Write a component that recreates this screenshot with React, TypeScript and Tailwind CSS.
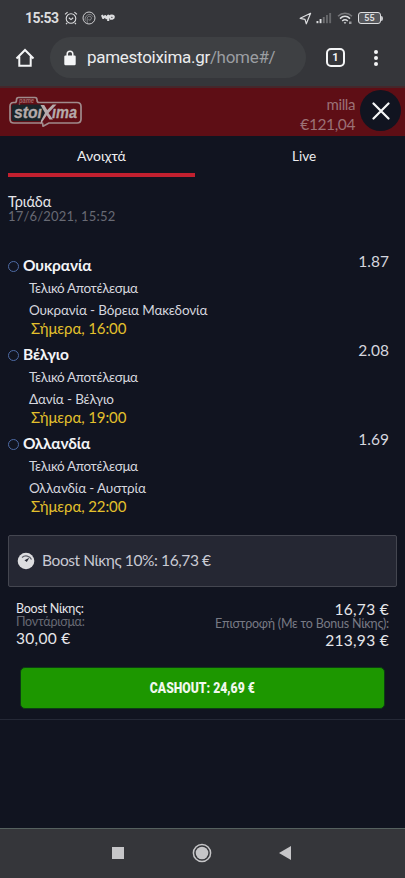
import React from "react";

interface Leg {
  team: string;
  market: string;
  match: string;
  time: string;
  odds: string;
}

const legs: Leg[] = [
  {
    team: "Ουκρανία",
    market: "Τελικό Αποτέλεσμα",
    match: "Ουκρανία - Βόρεια Μακεδονία",
    time: "Σήμερα, 16:00",
    odds: "1.87",
  },
  {
    team: "Βέλγιο",
    market: "Τελικό Αποτέλεσμα",
    match: "Δανία - Βέλγιο",
    time: "Σήμερα, 19:00",
    odds: "2.08",
  },
  {
    team: "Ολλανδία",
    market: "Τελικό Αποτέλεσμα",
    match: "Ολλανδία - Αυστρία",
    time: "Σήμερα, 22:00",
    odds: "1.69",
  },
];

const StatusBar = () => (
  <div className="flex h-[36px] items-center pl-[25px] pr-[22px] text-[#dcdddf]">
    <span className="w-[39px] text-[14px] font-bold leading-none tracking-[-0.5px]">15:53</span>
    <svg className="h-[14px] w-[14px]" viewBox="0 0 14 14" fill="none" stroke="currentColor" strokeWidth="1.1">
      <circle cx="7" cy="7.5" r="4.8" />
      <path d="M4.8 6.8L7 8.6l2.2-1.8M1 3.4L3.6 1.2M13 3.4L10.4 1.2M3.2 11.8l-1.2 1.3M10.8 11.8l1.2 1.3" />
    </svg>
    <svg className="ml-[4px] h-[14px] w-[14px]" viewBox="0 0 14 14" fill="none" stroke="currentColor">
      <circle cx="7" cy="7" r="6" strokeWidth="0.9" />
      <path d="M5.2 12.4V7.6c0-3 4.2-3 4.2-.4 0 2-2.2 2.3-3 1.4M3.3 9.8c-1.4-5.6 5.2-8.6 7.6-4.2" strokeWidth="0.8" opacity="0.6" />
    </svg>
    <svg className="ml-[5px] h-[10px] w-[14px]" viewBox="0 0 14 10" fill="none" stroke="currentColor" strokeWidth="2.1">
      <path d="M1 2l1.2 3L4.200 3l1.200 2.200L7.200 2.600V8M7.200 3.200h3.200M9 5.600V3.500c0-1.400 3.800-1.600 3.800.5S10 5.800 9 5.600" strokeLinejoin="round" />
    </svg>
    <div className="ml-auto flex items-center">
      <svg className="h-[13px] w-[13px]" viewBox="0 0 13 13" fill="none" stroke="currentColor" strokeWidth="1.2">
        <path d="M1.2 6.300L11.600 1.300 7.300 11.800 6 7.400z" strokeLinejoin="round" />
      </svg>
      <svg className="ml-[4px] h-[12px] w-[16px]" viewBox="0 0 16 12" fill="currentColor">
        <rect x="0.5" y="9" width="1.9" height="2.2" />
        <rect x="3.600" y="7" width="1.9" height="4.2" />
        <rect x="6.800" y="5" width="1.9" height="6.2" opacity="0.35" />
        <rect x="10" y="3" width="1.9" height="8.2" opacity="0.3" />
        <rect x="13.200" y="1" width="1.9" height="10.2" opacity="0.3" />
      </svg>
      <svg className="ml-[5px] h-[13px] w-[16px]" viewBox="0 0 16 13" fill="none" stroke="currentColor" strokeWidth="1.5">
        <path d="M1 4.2C5 .3 11 .3 15 4.2" opacity="0.4" />
        <path d="M3 6.6c3-3 7-3 10 0M5.2 9c1.8-1.6 3.8-1.6 5.6 0" />
        <path d="M6.6 10.2h2.8L8 12z" fill="currentColor" stroke="none" />
        <rect x="12" y="9.5" width="2.5" height="2.5" fill="currentColor" stroke="none" opacity="0.6" />
      </svg>
      <div className="ml-[5px] flex h-[12px] w-[23px] items-center justify-center rounded-[3px] border-[1.5px] border-[#dcdddf] bg-[#55575b] text-[9px] font-bold leading-none">
        55
      </div>
      <span className="h-[5px] w-[2px] rounded-r-sm bg-[#c6c7c9]" />
    </div>
  </div>
);

const AddressBar = () => (
  <div className="flex h-[50px] items-center pb-[7px] pl-[15px]">
    <svg className="h-[20px] w-[20px]" viewBox="0 0 20 20" fill="none" stroke="#f4f5f6" strokeWidth="2">
      <path d="M1.5 10.5L10 2l8.5 8.5M4.300 8.5v9.300h11.400V8.5" />
    </svg>
    <div className="ml-[15px] flex h-[41px] w-[256px] items-center rounded-full bg-[#3e4043] pl-[14px]">
      <svg className="h-[16px] w-[12px]" viewBox="0 0 12 16">
        <rect x="0.3" y="5.5" width="11.4" height="9.7" rx="1.2" fill="#f4f5f6" />
        <path d="M3.2 6V4a2.8 2.8 0 015.6 0v2" fill="none" stroke="#f4f5f6" strokeWidth="1.5" />
      </svg>
      <span className="ml-[11px] whitespace-nowrap text-[17px] leading-none tracking-[-0.29px] text-[#ebecee]">
        pamestoixima.gr<span className="text-[#9b9ea2]">/home#/</span>
      </span>
    </div>
    <div className="ml-[20px] flex h-[19px] w-[19px] items-center justify-center rounded-[5px] border-2 border-[#f4f5f6] text-[11px] font-bold leading-none text-[#f4f5f6]">
      1
    </div>
    <div className="ml-[29px] flex flex-col gap-[2px]">
      <span className="h-[4px] w-[4px] rounded-full bg-[#f4f5f6]" />
      <span className="h-[4px] w-[4px] rounded-full bg-[#f4f5f6]" />
      <span className="h-[4px] w-[4px] rounded-full bg-[#f4f5f6]" />
    </div>
  </div>
);

const Logo = () => (
  <svg className="h-[32px] w-[74px]" viewBox="0 0 74 32">
    <path
      d="M4.500 7.500h1.500q1.500 0 1.500-2.500 0-2.500 2-2.500h16.500q2 0 2 2.500t2 2.500H68q4 0 4 4V24q0 4-4 4H40l-6 3.200-.500-3.200H5q-4 0-4-4V11.500q0-4 3.500-4z"
      fill="#5e0e15"
      stroke="#a08b8c"
      strokeWidth="1.700"
      strokeLinejoin="round"
    />
    <path d="M4.500 9.500h28.500l4.500 8-6 8.500H5q-2.200 0-2.200-2V11.500q0-2 1.700-2z" fill="#1a2529" />
    <text x="10" y="7.500" fontFamily="Liberation Sans" fontSize="6.500" fontWeight="700" fontStyle="italic" fill="#a3686b" textLength="15" lengthAdjust="spacingAndGlyphs">
      pame
    </text>
    <g fontFamily="Liberation Sans" fontWeight="700" fontStyle="italic" fontSize="17" fill="#b5abab" stroke="#b5abab" strokeWidth="0.3">
      <text x="5" y="23" textLength="28" lengthAdjust="spacingAndGlyphs">stoı</text>
      <text x="43" y="23" textLength="25" lengthAdjust="spacingAndGlyphs">ıma</text>
    </g>
    <path d="M31.500 10h3.700l3 5 5.500-5.600h3.800l-8 8.600 4.500 6.500h-3.500l-2.800-4.300-6.200 9.300.500-4 4-7.500z" fill="#b5abab" />
  </svg>
);

const SiteHeader = () => (
  <div className="flex h-[50px] shrink-0 border-t-2 border-[#45272b] bg-[#5e0e15]">
    <div className="pl-[9px] pt-[7px]">
      <Logo />
    </div>
    <div className="ml-auto pt-[6px] text-right text-[15.5px] leading-[20px] tracking-[-0.4px] text-[#9b7175]">
      <div className="text-[15px]">milla</div>
      <div>€121,04</div>
    </div>
    <button className="ml-[5px] mr-[4px] mt-[2px] flex h-[41px] w-[41px] items-center justify-center rounded-full bg-[#111420]">
      <svg className="h-[18px] w-[18px]" viewBox="0 0 18 18" stroke="#f6f6f7" strokeWidth="2.2" strokeLinecap="round">
        <path d="M1.5 1.5l15 15M16.5 1.5l-15 15" />
      </svg>
    </button>
  </div>
);

const Tabs = () => (
  <div className="flex h-[41px] shrink-0 pl-2 text-[14px] leading-[40px] text-[#eeeef1]">
    <div className="w-[187px] shrink-0 border-b-4 border-[#c2202f] text-center">Ανοιχτά</div>
    <div className="w-[210px] shrink-0 pl-[97px] text-[13.5px]">Live</div>
  </div>
);

const LegRow: React.FC<{ leg: Leg }> = ({ leg }) => (
  <div className="flex h-[89px] items-start justify-between pl-2 pr-4 text-[#d5d6de]">
    <div className="whitespace-nowrap">
      <div className="flex h-[22px] items-center text-[15.5px] font-bold tracking-[-0.1px] text-[#f4f4f7]">
        <span className="mr-[4px] h-[11px] w-[11px] rounded-full border-[1.5px] border-[#4e6ba5]" />
        {leg.team}
      </div>
      <div className="pl-[21px] text-[13.5px] leading-[22px] tracking-[-0.35px]">{leg.market}</div>
      <div className="pl-[21px] text-[13.5px] leading-[22px] tracking-[-0.15px]">{leg.match}</div>
      <div className="pl-[23px] text-[15px] leading-[14px] tracking-[-0.1px] text-[#e3c02c]">{leg.time}</div>
    </div>
    <div className="text-[15.5px] leading-[13px]">{leg.odds}</div>
  </div>
);

const App: React.FC = () => {
  return (
    <div className="flex h-[878px] w-[405px] flex-col overflow-hidden bg-[#111420] font-[Lato,'Noto_Sans',sans-serif]">
      <div className="h-[86px] shrink-0 bg-[#35363a] font-[Roboto,sans-serif]">
        <StatusBar />
        <AddressBar />
      </div>

      <SiteHeader />
      <Tabs />

      <div className="h-[78px] shrink-0 pl-2 pt-[17px]">
        <div className="text-[14.5px] leading-[16px] tracking-[-0.1px] text-[#e6e6ea]">Τριάδα</div>
        <div className="text-[13px] leading-[13px] tracking-[0.2px] text-[#686a74]">17/6/2021, 15:52</div>
      </div>

      <div className="h-[280px] shrink-0">
        {legs.map((leg) => (
          <LegRow key={leg.team} leg={leg} />
        ))}
      </div>

      <div className="mx-2 flex h-[52px] shrink-0 items-center rounded-[2px] border border-[#444650] bg-[#252733] pb-px pl-[8px] text-[15.5px] tracking-[-0.4px] text-[#c9cad3]">
        <svg className="mr-[7px] h-[18px] w-[18px]" viewBox="0 0 18 18">
          <circle cx="9" cy="9" r="8.300" fill="#dddde0" />
          <path d="M5 5.500A6 6 0 0114.500 7.500" fill="none" stroke="#5a5c66" strokeWidth="1.200" />
          <path d="M12.300 5.800L9.800 10 7.500 8.300z" fill="#252733" />
        </svg>
        Boost Νίκης 10%: 16,73 €
      </div>

      <div className="flex h-[80px] shrink-0 justify-between pl-[16px] pr-4 pt-[15px] text-[15.5px] tracking-[0.3px] text-[#e6e6ea]">
        <div>
          <div className="text-[12.5px] leading-[13px] tracking-[-0.25px]">Boost Νίκης:</div>
          <div className="text-[12.5px] leading-[13px] tracking-[-0.25px] text-[#686a74]">Ποντάρισμα:</div>
          <div className="leading-[21px]">30,00 €</div>
        </div>
        <div className="text-right">
          <div className="leading-[15px]">16,73 €</div>
          <div className="text-[12.5px] leading-[13px] tracking-[-0.23px] text-[#787a84]">Επιστροφή (Με το Bonus Νίκης):</div>
          <div className="leading-[21px]">213,93 €</div>
        </div>
      </div>

      <button className="mx-[20px] h-[42px] shrink-0 rounded-[5px] border border-[#0c3d14] bg-[#1d9700] font-[Roboto,sans-serif] text-[14px] font-black text-[#f1f8ee]">
        <span className="inline-block scale-x-[0.87]">CASHOUT: 24,69 €</span>
      </button>
      <div className="mt-[10px] h-px shrink-0 bg-[#252936]" />

      <div className="mt-auto flex h-[50px] shrink-0 items-center border-t border-[#56615f] bg-[#35363a] pb-px pl-[112px]">
        <span className="h-[12px] w-[12px] bg-[#c6c6c8]" />
        <svg className="ml-[68px] h-[20px] w-[20px]" viewBox="0 0 20 20">
          <circle cx="10" cy="10" r="8.6" fill="none" stroke="#c6c6c8" strokeWidth="1.5" />
          <circle cx="10" cy="10" r="6.3" fill="#c6c6c8" />
        </svg>
        <svg className="ml-[67px] h-[14px] w-[12px]" viewBox="0 0 12 14" fill="#c6c6c8">
          <path d="M12 0v14L0 7z" />
        </svg>
      </div>
    </div>
  );
};

export default App;
